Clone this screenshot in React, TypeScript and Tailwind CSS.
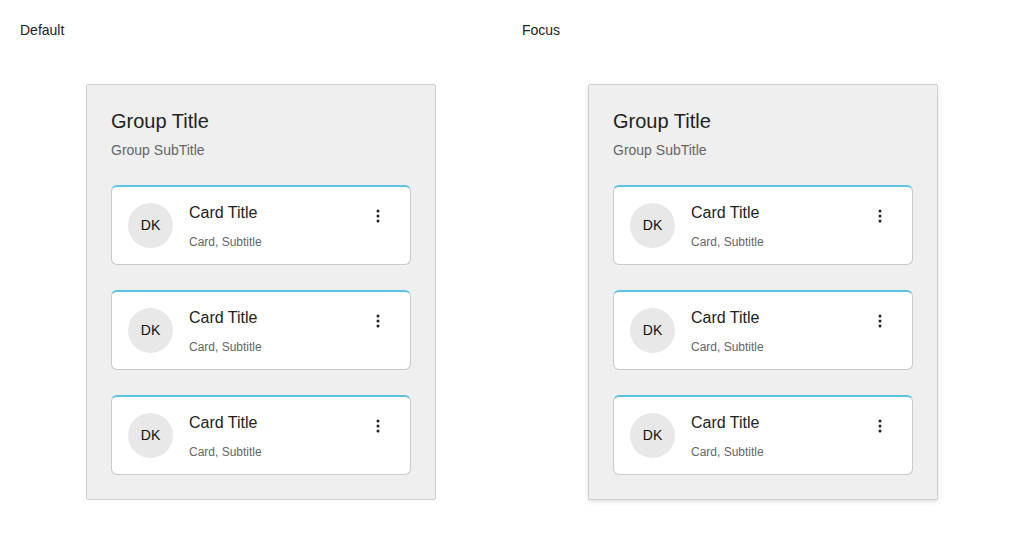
import React from 'react'

const CARDS = [0, 1, 2]

function Kebab() {
  return (
    <svg width="24" height="24" viewBox="0 0 24 24" className="text-[#222]">
      <circle cx="12" cy="7" r="1.5" fill="currentColor" />
      <circle cx="12" cy="12" r="1.5" fill="currentColor" />
      <circle cx="12" cy="17" r="1.5" fill="currentColor" />
    </svg>
  )
}

function Card() {
  return (
    <div className="flex items-center h-[80px] bg-white rounded-[6px] border border-[#c9c9c9] border-t-2 border-t-[#5ec2e3] pl-4 pr-5">
      <div className="w-[45px] h-[45px] rounded-full bg-[#e8e8e8] flex items-center justify-center text-[14px] text-[#111] shrink-0">
        DK
      </div>
      <div className="flex-1 ml-4 flex flex-col gap-[9px]">
        <div className="text-[16px] leading-6 text-[#222]">Card Title</div>
        <div className="text-[12px] leading-4 text-[#666]">Card, Subtitle</div>
      </div>
      <div className="self-start mt-[17px]">
        <Kebab />
      </div>
    </div>
  )
}

function Group({ focus }: { focus?: boolean }) {
  return (
    <div
      className={`w-[350px] bg-[#efefef] border border-[#cfcfcf] rounded-[2px] px-6 pt-6 pb-6 ${
        focus ? 'shadow-[0_2px_5px_rgba(0,0,0,0.12)]' : ''
      }`}
    >
      <div className="text-[20px] leading-6 text-[#222]">Group Title</div>
      <div className="text-[14px] leading-5 text-[#666] mt-[7px]">Group SubTitle</div>
      <div className="flex flex-col gap-[25px] mt-[25px]">
        {CARDS.map((c) => (
          <Card key={c} />
        ))}
      </div>
    </div>
  )
}

export default function App() {
  return (
    <div className="w-[1024px] h-[559px] bg-white flex pl-5 pt-5 font-['Liberation_Sans',Arial,sans-serif]">
      {[
        { label: 'Default', focus: false },
        { label: 'Focus', focus: true },
      ].map((col) => (
        <div key={col.label} className="w-[502px] shrink-0 flex flex-col">
          <div className="text-[14px] leading-5 text-[#222]">{col.label}</div>
          <div className="mt-[44px] ml-[66px]">
            <Group focus={col.focus} />
          </div>
        </div>
      ))}
    </div>
  )
}
